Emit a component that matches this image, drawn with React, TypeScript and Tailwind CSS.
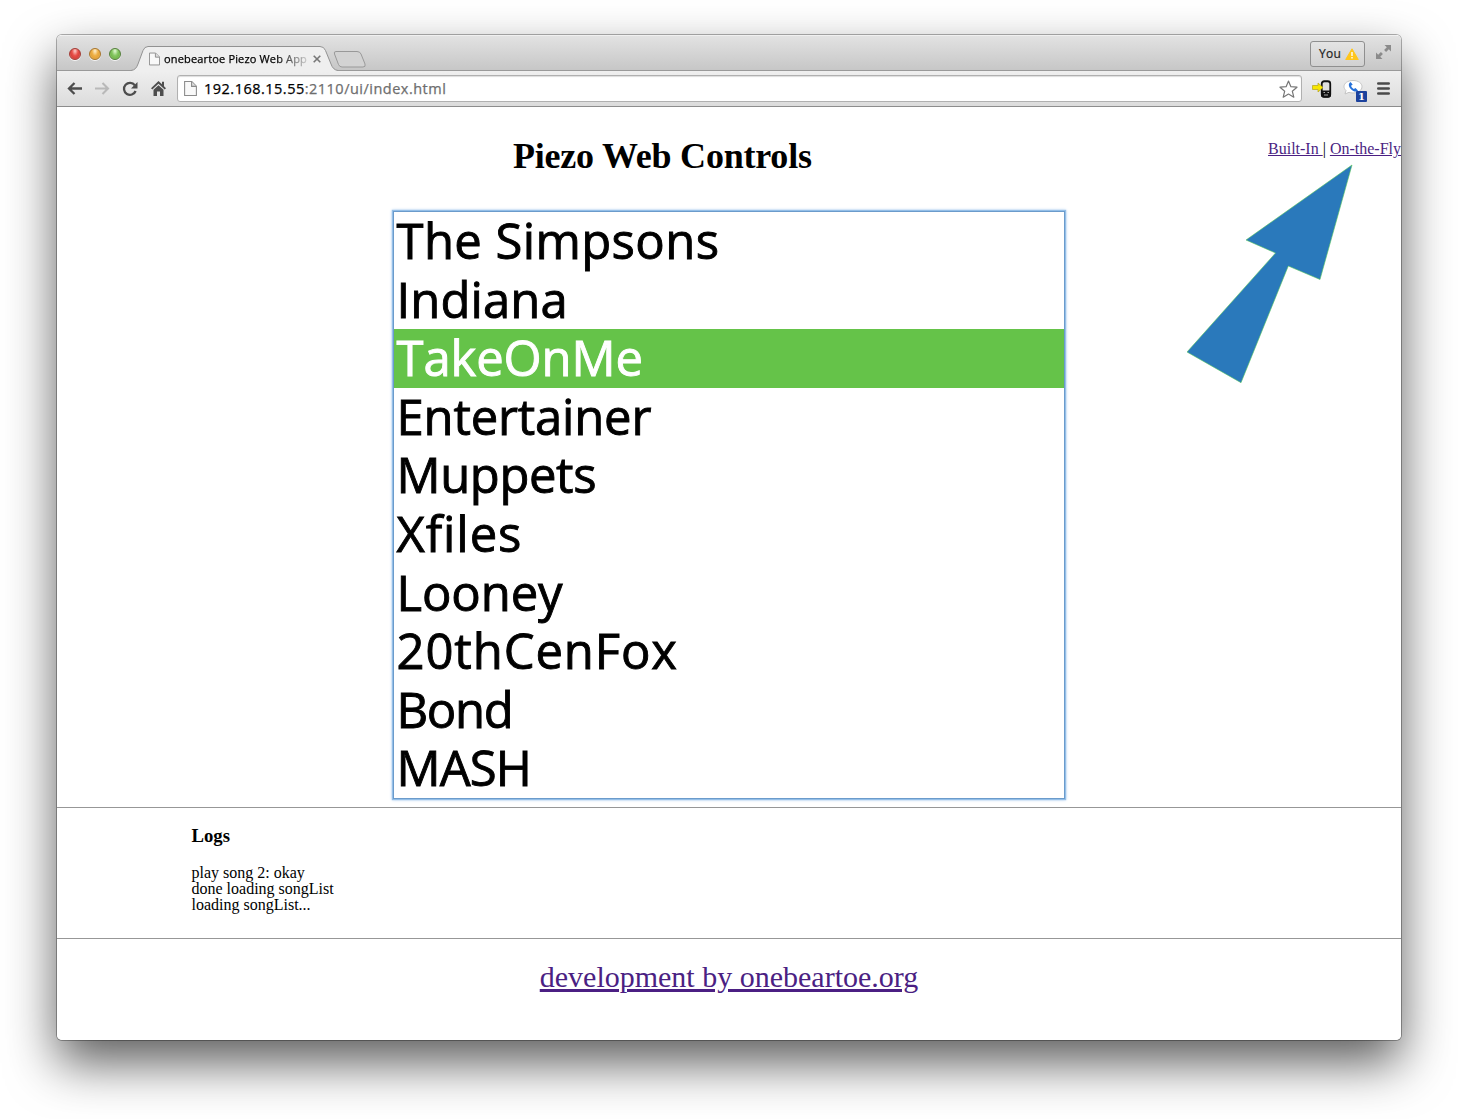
const songs = [
  { name: 'The Simpsons', spacing: 'tracking-[0.4px]' },
  { name: 'Indiana', spacing: 'tracking-[0.1px]' },
  { name: 'TakeOnMe', spacing: 'tracking-[-0.1px]' },
  { name: 'Entertainer', spacing: 'tracking-[-0.2px]' },
  { name: 'Muppets', spacing: 'tracking-[-0.4px]' },
  { name: 'Xfiles', spacing: 'tracking-[0.9px]' },
  { name: 'Looney', spacing: 'tracking-[-0.1px]' },
  { name: '20thCenFox', spacing: 'tracking-[0.9px]' },
  { name: 'Bond', spacing: 'tracking-[-1.300px]' },
  { name: 'MASH', spacing: 'tracking-[-0.9px]' },
];

const lights = [
  'border-[#a33c36] bg-[radial-gradient(ellipse_at_50%_20%,#fbd0cc_0%,#e8504a_42%,#d8413c_65%,#ff9f96_100%)]',
  'border-[#a8752c] bg-[radial-gradient(ellipse_at_50%_20%,#fff0d0_0%,#eeb045_42%,#e5a23a_65%,#fff07f_100%)]',
  'border-[#55803c] bg-[radial-gradient(ellipse_at_50%_20%,#e4fbd6_0%,#86c763_42%,#74b94f_65%,#ccff9c_100%)]',
];

function PageIcon({ className }: { className: string }) {
  return (
    <svg className={className} viewBox="0 0 12 14" fill="#f9f9f9" stroke="#8b8b8b">
      <path d="M.5.5h6.7l4.3 4.3v8.7H.5z" />
      <path d="M7 .7V5h4.3" fill="#ddd" />
    </svg>
  );
}

function TitleBar() {
  return (
    <div className="flex h-[36px] items-start border-t border-[#f0f0f0] bg-gradient-to-b from-[#e2e2e2] to-[#c6c6c6] shadow-[inset_0_-1px_0_#9a9a9a]">
      <div className="mt-[12px] ml-3 flex gap-2">
        {lights.map((l) => (
          <span key={l} className={`h-3 w-3 rounded-full border shadow-[0_1px_0_#f4f4f4] ${l}`} />
        ))}
      </div>
      <div className="relative mt-[10px] ml-[10px] h-[25px] w-[208px]">
        <svg className="absolute inset-0" width="208" height="25" viewBox="0 0 208 25">
          <path d="M0 24.500C4 24 5.500 22 7 18L12 4.500Q13.500.5 17 .5H189Q193 .5 194.500 4.500L200 18Q202 24 207 24.500V25H0z" fill="#efefef" />
          <path d="M0 24.500C4 24 5.500 22 7 18L12 4.500Q13.500.5 17 .5H189Q193 .5 194.500 4.500L200 18Q202 24 207 24.500" fill="none" stroke="#929292" />
        </svg>
        <div className="relative flex items-center pt-[5px] pl-[18px]">
          <PageIcon className="h-[14px] w-[11px] shrink-0" />
          <span className="ml-[4px] h-4 w-[144px] overflow-hidden text-[11px] leading-4 tracking-[0.16px] whitespace-nowrap text-black [-webkit-text-stroke:0.25px_currentColor] [mask-image:linear-gradient(to_right,black_78%,transparent_103%)]">
            onebeartoe Piezo Web App
          </span>
          <svg className="ml-[5px]" width="8" height="8" viewBox="0 0 8 8" stroke="#777" strokeWidth="1.600">
            <path d="M.7.7l6.600 6.600M7.300.7.7 7.300" />
          </svg>
        </div>
      </div>
      <svg className="-ml-[6px] mt-[15px]" width="34" height="17" viewBox="0 0 34 17">
        <path d="M3 .5H24Q27 .5 28 3L32 13Q33 16 30 16H9Q6.500 16 5.500 13.500L1.500 3Q.5.5 3 .5z" fill="#d3d3d3" stroke="#999" />
      </svg>
      <div className="mt-[5px] ml-auto flex h-[26px] w-[55px] items-center rounded-[3px] border border-[#8f8f8f] bg-gradient-to-b from-[#e4e4e4] to-[#d1d1d1] pl-2 text-[12px] tracking-[0.3px] text-[#222] [-webkit-text-stroke:0.2px_currentColor]">
        You
        <svg className="ml-[4px]" width="14" height="12" viewBox="0 0 14 12">
          <path d="M7 .8 13.300 11.500H.7z" fill="#ffc61c" stroke="#ffc61c" strokeLinejoin="round" />
          <path d="M7 4v4M7 9v1.500" stroke="#fff" strokeWidth="1.400" />
        </svg>
      </div>
      <svg className="mt-[9px] mr-[10px] ml-[11px]" width="15" height="14" viewBox="0 0 15 14" fill="#8b8b8b">
        <path d="M8.500 0H15v6.500l-2.200-2.200-2.700 2.700-2-2 2.700-2.700zM0 7.500l2.200 2.200 2.700-2.700 2 2-2.700 2.700L6.500 14H0z" />
      </svg>
    </div>
  );
}

function ToolBar() {
  return (
    <div className="flex h-[36px] items-center border-b border-[#8d8d8d] bg-gradient-to-b from-[#efefef] to-[#dcdcdc]">
      <svg className="ml-[10px]" width="16" height="13" viewBox="0 0 16 13" fill="none" stroke="#4d4d4d" strokeWidth="2.300">
        <path d="M7.500 1 2 6.500 7.500 12M2 6.500h13" />
      </svg>
      <svg className="ml-[11px]" width="16" height="13" viewBox="0 0 16 13" fill="none" stroke="#b9b9b9" strokeWidth="2.100">
        <path d="M8.500 1 14 6.500 8.500 12M14 6.500H1" />
      </svg>
      <svg className="ml-[12px]" width="16" height="16" viewBox="0 0 16 16">
        <path d="M12.800 4.200A6 6 0 1 0 13.600 10" fill="none" stroke="#4d4d4d" strokeWidth="2.300" />
        <path d="M15.500 1v6.500H9z" fill="#4d4d4d" />
      </svg>
      <svg className="ml-[13px]" width="15" height="15" viewBox="0 0 15 15" fill="#4d4d4d">
        <path d="M7.500 0 0 7.200 1.300 8.500 7.500 2.700l6.200 5.800L15 7.200l-2-2V.8h-2V3.300z" />
        <path d="M2.500 8.800 7.500 4.200l5 4.600V15H9v-4.500H6V15H2.500z" />
      </svg>
      <div className="ml-[11px] flex h-[27px] w-[1125px] items-center rounded-[3px] border border-[#b0b0b0] bg-white pr-[3px] pl-[6px] shadow-[inset_0_1px_1px_#ddd]">
        <PageIcon className="h-[15px] w-[13px]" />
        <span className="ml-[7px] text-[14.500px] tracking-[0.490px] text-[#6e6e6e] [-webkit-text-stroke:0.250px_currentColor]">
          <span className="text-black">192.168.15.55</span>:2110/ui/index.html
        </span>
        <svg className="ml-auto" width="19" height="18" viewBox="0 0 19 18" fill="#fff" stroke="#777" strokeWidth="1.200" strokeLinejoin="round">
          <path d="m9.500 1 2.400 5.700 6.100.5-4.700 4 1.500 6-5.300-3.200-5.300 3.200 1.500-6-4.700-4 6.100-.5z" />
        </svg>
      </div>
      <svg className="ml-[10px]" width="20" height="18" viewBox="0 0 20 18">
        <rect x="9.750" y="1.250" width="8.500" height="15.500" rx="2.500" fill="#dedede" stroke="#111" strokeWidth="1.800" />
        <path d="M9 10.500h10V15q0 2.500-2.500 2.500h-5Q9 17.500 9 15z" fill="#111" />
        <path d="M11.500 12.500h1.500M15.500 12.500h1.500M12 15h4" stroke="#aaa" />
        <path d="M.5 5.500H6V3l5 4.500L6 12V9.500H.5z" fill="#f7e600" stroke="#b3a21c" strokeWidth=".7" />
      </svg>
      <div className="relative ml-[11px] h-[24px] w-[25px]">
        <svg className="absolute inset-0" width="25" height="24" viewBox="0 0 25 24">
          <path d="M10 3.500c5.500 0 9 2.800 9 6.200S15.500 16 10 16c-1.500 0-3-.3-4-.7L2 17l1-3.500C1.700 12.300 1 11 1 9.700c0-3.400 3.500-6.200 9-6.200z" fill="#fff" stroke="#c5c5c5" />
          <path d="M7.500 5C5 6.500 5.500 9.800 8 12.200s5.500 3.300 7 1.200l-2.500-2.500-1.700 1c-1.500-.8-2.400-2-2.700-3.200l1.600-1.200z" fill="#2671d9" />
        </svg>
        <span className="absolute top-[14px] left-[13px] flex h-[11px] w-[11px] items-center justify-center rounded-[1px] bg-[#1c429d] font-['DejaVu_Serif'] text-[10px] leading-[11px] font-bold text-white">1</span>
      </div>
      <svg className="ml-[9px]" width="13" height="13" viewBox="0 0 13 13" stroke="#4a4a4a" strokeWidth="2.600" strokeLinecap="round">
        <path d="M1.300 1.500h10.400M1.300 6.500h10.400M1.300 11.500h10.400" />
      </svg>
    </div>
  );
}

export default function App() {
  return (
    <div className="h-[1119px] w-[1458px] overflow-hidden bg-white pt-[35px] pl-[57px] font-['Open_Sans','Noto_Sans',sans-serif]">
      <div className="relative h-[1005px] w-[1344px] rounded-[5px] shadow-[0_0_0_1px_rgba(0,0,0,0.3),0_23px_50px_rgba(0,0,0,0.64)]">
        <div className="flex h-full flex-col overflow-hidden rounded-[5px] bg-white">
          <TitleBar />
          <ToolBar />
          <main className="font-['Liberation_Serif',serif] text-black">
            <header className="flex h-[104px] items-start">
              <h1 className="mt-[28px] ml-[456px] w-[420px] text-[36px] leading-[42px] font-bold tracking-[-0.220px] whitespace-nowrap">Piezo Web Controls</h1>
              <nav className="mt-[33px] ml-auto text-[16px] leading-[18px] whitespace-nowrap text-[#4b1f83]">
                <a className="underline">Built-In </a>
                <span className="text-black">|</span> <a className="underline">On-the-Fly</a>
              </nav>
            </header>
            <div className="ml-[336px] flex h-[588px] w-[672px] flex-col border border-[#6b9bcb] font-['Open_Sans','Noto_Sans',sans-serif] shadow-[0_0_1px_1px_#94bfe8,0_0_3px_1px_#b9d6f2]">
              {songs.map((s) => (
                <div
                  key={s.name}
                  className={`h-[58.600px] shrink-0 pl-[2.500px] text-[49px] leading-[57.500px] [-webkit-text-stroke:0.900px_currentColor] ${s.spacing} ${s.name === 'TakeOnMe' ? 'bg-[#65c349] text-white' : ''}`}
                >
                  {s.name}
                </div>
              ))}
            </div>
            <section className="mt-[8px] h-[132px] border-y border-[#979797] pt-[17px] pl-[134.500px]">
              <h2 className="text-[18.700px] leading-[22px] font-bold">Logs</h2>
              <div className="mt-[18px] text-[16px] leading-[16px]">
                <p>play song 2: okay</p>
                <p>done loading songList</p>
                <p>loading songList...</p>
              </div>
            </section>
            <footer className="mt-[20px] text-center text-[30px] leading-[36px] text-[#4b1f83]">
              <a className="underline">development by onebeartoe.org</a>
            </footer>
          </main>
        </div>
        <svg className="absolute top-[129px] left-[1130px]" width="167" height="220" viewBox="0 0 167 220">
          <path d="M165 1 133 115.500 101.300 102 54 218.700 0 188 88.500 89 59 76z" fill="#2a79bb" stroke="#55c65a" strokeWidth=".6" />
        </svg>
      </div>
    </div>
  );
}
